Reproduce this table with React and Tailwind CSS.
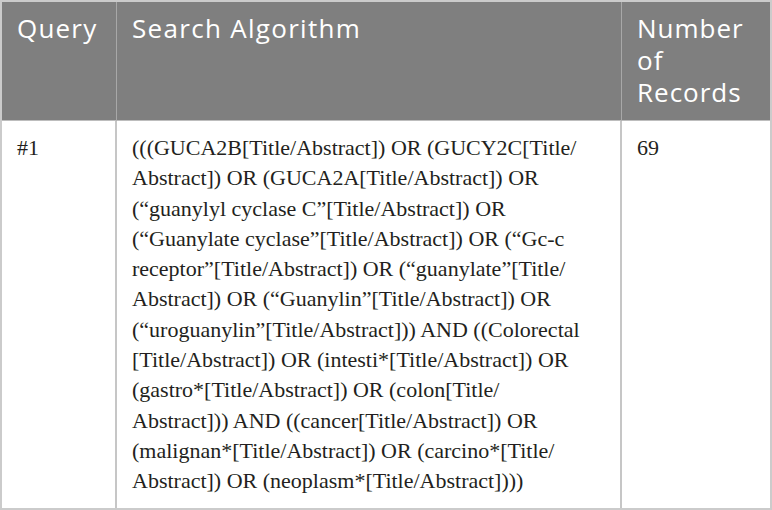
export default function App() {
  const lines = [
    "(((GUCA2B[Title/Abstract]) OR (GUCY2C[Title/",
    "Abstract]) OR (GUCA2A[Title/Abstract]) OR",
    "(“guanylyl cyclase C”[Title/Abstract]) OR",
    "(“Guanylate cyclase”[Title/Abstract]) OR (“Gc-c",
    "receptor”[Title/Abstract]) OR (“guanylate”[Title/",
    "Abstract]) OR (“Guanylin”[Title/Abstract]) OR",
    "(“uroguanylin”[Title/Abstract])) AND ((Colorectal",
    "[Title/Abstract]) OR (intesti*[Title/Abstract]) OR",
    "(gastro*[Title/Abstract]) OR (colon[Title/",
    "Abstract])) AND ((cancer[Title/Abstract]) OR",
    "(malignan*[Title/Abstract]) OR (carcino*[Title/",
    "Abstract]) OR (neoplasm*[Title/Abstract])))",
  ];
  return (
    <div className="w-[772px] h-[510px] bg-white">
      <div className="w-[772px] h-[510px] border-2 border-[#cbcbcb] grid grid-cols-[115px_505px_1fr] grid-rows-[119px_1fr]">
        <div className="bg-[#7f7f7f] border-r border-[#a8a8a8] border-b border-b-[#bdbdbd] pl-[15px] pt-[10px] text-white text-[26px] leading-[32px] font-['Open_Sans',sans-serif] tracking-[1.2px]">
          Query
        </div>
        <div className="bg-[#7f7f7f] border-r border-[#a8a8a8] border-b border-b-[#bdbdbd] pl-[15px] pt-[10px] text-white text-[26px] leading-[32px] font-['Open_Sans',sans-serif] tracking-[1.3px]">
          Search Algorithm
        </div>
        <div className="bg-[#7f7f7f] border-b border-b-[#bdbdbd] pl-[15px] pt-[10px] text-white text-[26px] leading-[32px] font-['Open_Sans',sans-serif] tracking-[1px]">
          Number
          <br />
          of
          <br />
          Records
        </div>
        <div className="border-r-2 border-[#c6c6c6] pl-[15px] pt-[12px] text-[#231f20] text-[22px] leading-[30.3px] font-['Liberation_Serif',serif]">
          #1
        </div>
        <div className="border-r-2 border-[#c6c6c6] pl-[15px] pt-[12px] text-[#231f20] text-[22px] leading-[30.3px] font-['Liberation_Serif',serif] whitespace-nowrap">
          {lines.map((l, i) => (
            <div key={i}>{l}</div>
          ))}
        </div>
        <div className="pl-[15px] pt-[12px] text-[#231f20] text-[22px] leading-[30.3px] font-['Liberation_Serif',serif]">
          69
        </div>
      </div>
    </div>
  );
}
